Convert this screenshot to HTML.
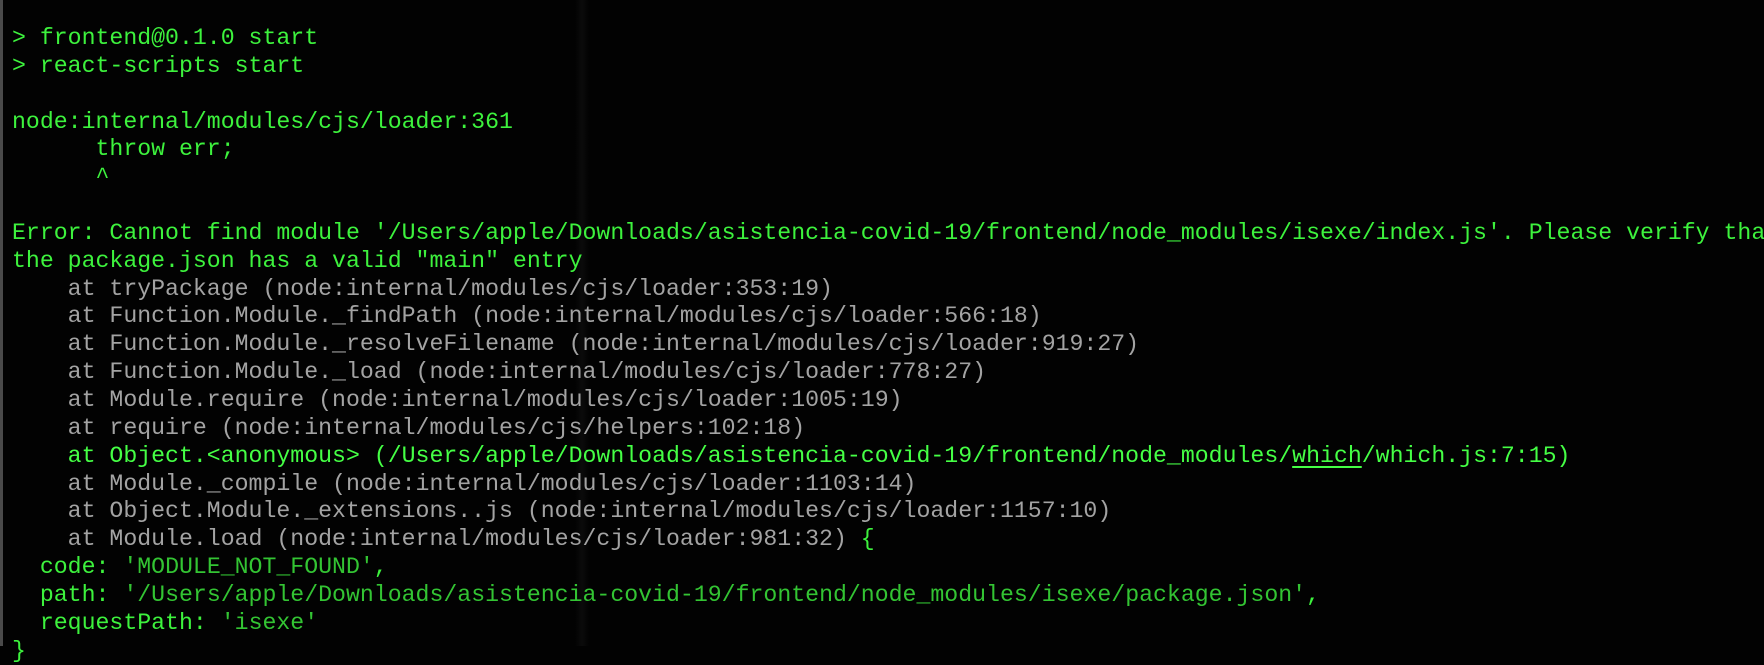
<!DOCTYPE html>
<html><head><meta charset="utf-8"><style>
html,body{margin:0;padding:0;width:1764px;height:646px;overflow:hidden;background:#020202;}
.bar{position:absolute;left:0;top:0;width:3px;height:646px;background:#4a4a4a;}
.ghost{position:absolute;left:575px;top:0;width:14px;height:646px;background:linear-gradient(90deg,#020202,#0b0b0b,#020202);}
pre{position:absolute;left:12px;top:25px;margin:0;font-family:"Liberation Mono",monospace;font-size:23.2px;line-height:27.85px;color:#3df23d;white-space:pre;}
.g{color:#a3a3a3}
.s{color:#33c433}
.b{color:#45ff45}
u{text-decoration-thickness:2px;text-underline-offset:4px}
</style></head><body>
<div class="bar"></div><div class="ghost"></div>
<pre>&gt; frontend@0.1.0 start
&gt; react-scripts start

node:internal/modules/cjs/loader:361
      throw err;
      ^

Error: Cannot find module '/Users/apple/Downloads/asistencia-covid-19/frontend/node_modules/isexe/index.js'. Please verify that
the package.json has a valid "main" entry
<span class="g">    at tryPackage (node:internal/modules/cjs/loader:353:19)
    at Function.Module._findPath (node:internal/modules/cjs/loader:566:18)
    at Function.Module._resolveFilename (node:internal/modules/cjs/loader:919:27)
    at Function.Module._load (node:internal/modules/cjs/loader:778:27)
    at Module.require (node:internal/modules/cjs/loader:1005:19)
    at require (node:internal/modules/cjs/helpers:102:18)</span>
<span class="b">    at Object.&lt;anonymous&gt; (/Users/apple/Downloads/asistencia-covid-19/frontend/node_modules/<u>which</u>/which.js:7:15)</span>
<span class="g">    at Module._compile (node:internal/modules/cjs/loader:1103:14)
    at Object.Module._extensions..js (node:internal/modules/cjs/loader:1157:10)
    at Module.load (node:internal/modules/cjs/loader:981:32)</span> {
  code: <span class="s">'MODULE_NOT_FOUND'</span>,
  path: <span class="s">'/Users/apple/Downloads/asistencia-covid-19/frontend/node_modules/isexe/package.json'</span>,
  requestPath: <span class="s">'isexe'</span>
}</pre>
</body></html>
